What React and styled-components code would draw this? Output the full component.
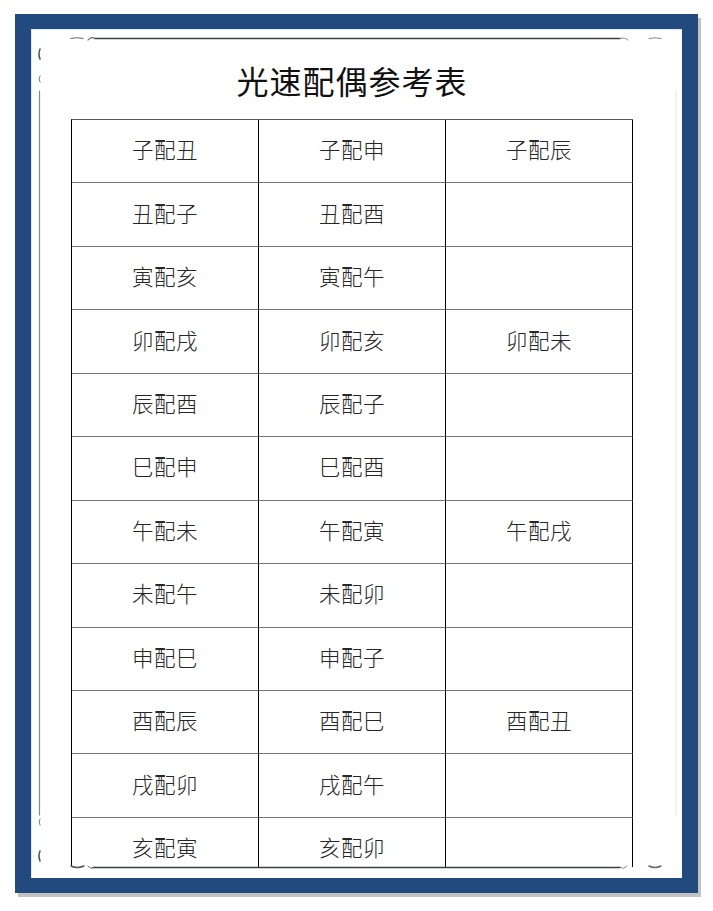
import styled, { createGlobalStyle } from 'styled-components'

const GlobalStyle = createGlobalStyle`
  html, body {
    margin: 0;
    padding: 0;
    background: #ffffff;
  }
  body {
    font-family: "Noto Sans CJK SC", "Noto Sans", sans-serif;
  }
`

const rows = [
  ['子配丑', '子配申', '子配辰'],
  ['丑配子', '丑配酉', ''],
  ['寅配亥', '寅配午', ''],
  ['卯配戌', '卯配亥', '卯配未'],
  ['辰配酉', '辰配子', ''],
  ['巳配申', '巳配酉', ''],
  ['午配未', '午配寅', '午配戌'],
  ['未配午', '未配卯', ''],
  ['申配巳', '申配子', ''],
  ['酉配辰', '酉配巳', '酉配丑'],
  ['戌配卯', '戌配午', ''],
  ['亥配寅', '亥配卯', '']
]

const Page = styled.div`
  padding: 14px 0 0 15px;
  width: 713px;
  height: 911px;
  box-sizing: border-box;
`

const Frame = styled.div`
  width: 683px;
  height: 879px;
  box-sizing: border-box;
  border: solid #234a7f;
  border-width: 15px 16px 15px 16px;
  box-shadow: 3px 4px 0 #c2c2c2;
  background: #ffffff;
`

const Panel = styled.div`
  position: relative;
  height: 100%;
  padding-bottom: 11px;
  box-sizing: border-box;
  box-shadow: inset 1px 1px 0 #dce6f4;
`

const Content = styled.div`
  height: 100%;
  overflow: hidden;
  padding-left: 40px;
  display: flex;
  flex-direction: column;
  align-items: flex-start;
`

const Title = styled.h1`
  width: 562px;
  margin: 37px 0 23px;
  padding-bottom: 2px;
  height: 30px;
  box-sizing: border-box;
  font-size: 32px;
  line-height: 28px;
  font-weight: 400;
  color: #111;
  text-align: center;
  letter-spacing: 1px;
`

const Table = styled.div`
  display: grid;
  grid-template-columns: repeat(3, 187px);
  grid-auto-rows: 63.45px;
  border-left: 1px solid #000;
  border-top: 1px solid #555;
  flex-shrink: 0;
`

const Cell = styled.div`
  display: flex;
  align-items: center;
  justify-content: center;
  padding-bottom: 5px;
  border-right: 1px solid #000;
  border-bottom: 1.5px solid #767676;
  box-sizing: border-box;
  font-size: 21.5px;
  font-weight: 300;
  color: #262626;
  letter-spacing: 0.5px;
`

const Decor = styled.svg`
  position: absolute;
  left: 0;
  top: 0;
  pointer-events: none;
`

const Ornament = () => (
  <Decor width="651" height="849" viewBox="0 0 651 849">
    <g fill="none" strokeLinecap="round">
      <line x1="64" y1="9.5" x2="589" y2="9.5" stroke="#3a3f47" strokeWidth="1.6" />
      <line x1="62" y1="838.5" x2="589" y2="838.5" stroke="#3a3f47" strokeWidth="1.6" />
      <line x1="8.5" y1="62" x2="8.5" y2="786" stroke="#8a8a8a" strokeWidth="1.2" />
      <line x1="645" y1="62" x2="645" y2="786" stroke="#e6e6e6" strokeWidth="1" />
      {/* top left curls */}
      <path d="M40 9.5 Q46 8 52 9.5" stroke="#666" strokeWidth="1.2" />
      <path d="M57 11 Q60 7 64 9.5" stroke="#666" strokeWidth="1.2" />
      <path d="M9 20 Q7 25 9 30" stroke="#555" strokeWidth="1.6" />
      <path d="M9 47 Q7 50 9 53" stroke="#777" strokeWidth="1" />
      {/* top right curls */}
      <path d="M589 9.5 Q594 8 597 11" stroke="#888" strokeWidth="1" />
      <path d="M618 9.5 Q624 8 630 9.5" stroke="#888" strokeWidth="1" />
      {/* bottom left curls */}
      <path d="M9 790 Q7 793 9 796" stroke="#777" strokeWidth="1" />
      <path d="M9 822 Q7 827 9 832" stroke="#555" strokeWidth="1.6" />
      <path d="M40 837 Q46 840 53 837" stroke="#555" strokeWidth="1.4" />
      <path d="M57 837 Q60 841 64 838" stroke="#666" strokeWidth="1" />
      {/* bottom right curls */}
      <path d="M589 838 Q592 841 596 837" stroke="#888" strokeWidth="1" />
      <path d="M618 837 Q624 840 630 837" stroke="#666" strokeWidth="1.4" />
    </g>
  </Decor>
)

const App = () => (
  <>
    <GlobalStyle />
    <Page>
      <Frame>
        <Panel>
          <Content>
            <Title>光速配偶参考表</Title>
            <Table>
              {rows.map((row, r) =>
                row.map((text, c) => <Cell key={`${r}-${c}`}>{text}</Cell>)
              )}
            </Table>
          </Content>
          <Ornament />
        </Panel>
      </Frame>
    </Page>
  </>
)

export default App
